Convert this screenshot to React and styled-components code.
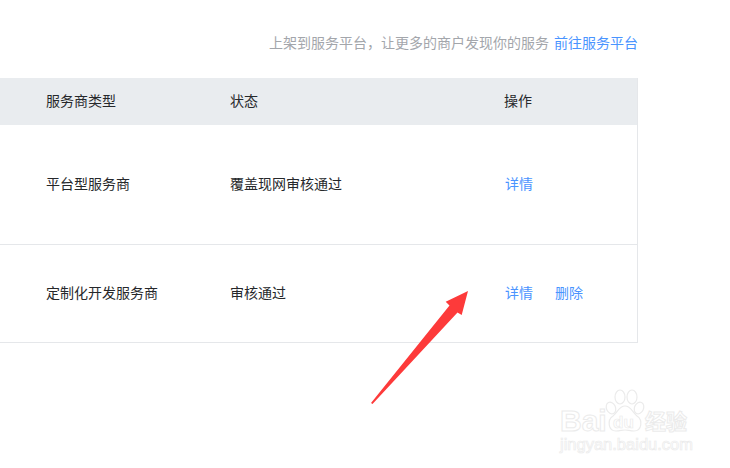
import React from "react";
import styled, { createGlobalStyle } from "styled-components";

const GlobalStyle = createGlobalStyle`
  html, body {
    margin: 0;
    padding: 0;
    background: #fff;
  }
  body {
    font-family: "Noto Sans CJK SC", "Liberation Sans", sans-serif;
    font-size: 14px;
  }
`;

const SPage = styled.div`
  position: relative;
  width: 730px;
  height: 468px;
  overflow: hidden;
  background: #fff;
`;

const SContent = styled.div`
  width: 638px;
  padding-top: 32px;
`;

const SNotice = styled.div`
  display: flex;
  justify-content: flex-end;
  gap: 5px;
  height: 20px;
  line-height: 20px;
  margin-bottom: 26px;
  color: #a3a6ab;
`;

const SLink = styled.a`
  color: #4a94ff;
  text-decoration: none;
  cursor: pointer;
`;

const STable = styled.div`
  border-right: 1px solid #e5e7ea;
  border-bottom: 1px solid #e5e7ea;
`;

const SRow = styled.div`
  display: grid;
  grid-template-columns: 230px 274px 1fr;
  align-items: center;
  height: ${(props) => props.$height}px;
  background: ${(props) => (props.$head ? "#e9ecef" : "#fff")};
  border-top: ${(props) => (props.$line ? "1px solid #e5e7ea" : "none")};
  color: #26282b;
`;

const SCell = styled.div`
  padding-left: ${(props) => props.$indent || 0}px;
  padding-bottom: 4px;
`;

const SActions = styled.div`
  display: flex;
  gap: 22px;
  padding-left: 1px;
  padding-bottom: 4px;
`;

const SArrow = styled.svg`
  position: absolute;
  left: 360px;
  top: 280px;
`;

const SWatermark = styled.div`
  position: absolute;
  left: 560px;
  top: 388px;
  width: 136px;
  height: 64px;
  color: #fff;
  -webkit-text-stroke: 1px #ebebeb;
  pointer-events: none;
`;

const SBaidu = styled.span`
  position: absolute;
  left: 0;
  top: 18px;
  font-family: "Liberation Sans", sans-serif;
  font-size: 30px;
  font-weight: 700;
  line-height: 30px;
`;

const SJingyan = styled.span`
  position: absolute;
  left: 85px;
  top: 17px;
  font-size: 21px;
  font-weight: 700;
  line-height: 30px;
  white-space: nowrap;
`;

const SDomain = styled.span`
  position: absolute;
  left: 0;
  top: 47px;
  font-family: "Liberation Sans", sans-serif;
  font-size: 16.5px;
  line-height: 18px;
  white-space: nowrap;
  -webkit-text-stroke-width: 0.7px;
`;

const SPaw = styled.svg`
  position: absolute;
  left: 45px;
  top: 1px;
`;

const SPawText = styled.span`
  position: absolute;
  left: 53px;
  top: 26px;
  font-family: "Liberation Sans", sans-serif;
  font-size: 17px;
  font-weight: 700;
  line-height: 18px;
  -webkit-text-stroke-width: 0.7px;
`;

function App() {
  return (
    <SPage>
      <GlobalStyle />
      <SContent>
        <SNotice>
          <span>上架到服务平台，让更多的商户发现你的服务</span>
          <SLink>前往服务平台</SLink>
        </SNotice>
        <STable>
          <SRow $head $height={47}>
            <SCell $indent={46}>服务商类型</SCell>
            <SCell>状态</SCell>
            <SCell>操作</SCell>
          </SRow>
          <SRow $height={119}>
            <SCell $indent={46}>平台型服务商</SCell>
            <SCell>覆盖现网审核通过</SCell>
            <SActions>
              <SLink>详情</SLink>
            </SActions>
          </SRow>
          <SRow $line $height={97}>
            <SCell $indent={46}>定制化开发服务商</SCell>
            <SCell>审核通过</SCell>
            <SActions>
              <SLink>详情</SLink>
              <SLink>删除</SLink>
            </SActions>
          </SRow>
        </STable>
      </SContent>

      <SArrow width="120" height="130" viewBox="360 280 120 130">
        <polygon
          points="468,291 461.7,315 457.5,312.5 372.5,404 371,403 449.5,305.5 445.7,301.7"
          fill="#fd3a3a"
        />
      </SArrow>

      <SWatermark>
        <SBaidu>Bai</SBaidu>
        <SPaw width="40" height="44" viewBox="0 0 40 44" fill="#fff" stroke="#ebebeb" strokeWidth="1.2">
          <ellipse cx="6" cy="19" rx="4.5" ry="6" transform="rotate(-25 6 19)" />
          <ellipse cx="15" cy="8" rx="5" ry="7" />
          <ellipse cx="27" cy="8" rx="5" ry="7" />
          <ellipse cx="34" cy="19" rx="4.5" ry="6" transform="rotate(25 34 19)" />
          <path d="M20 17c-6 0-7 6-12 10-6 4-5 15 3 15 4 0 6-1 9-1s5 1 9 1c8 0 9-11 3-15-5-4-6-10-12-10z" />
        </SPaw>
        <SPawText>du</SPawText>
        <SJingyan>经验</SJingyan>
        <SDomain>jingyan.baidu.com</SDomain>
      </SWatermark>
    </SPage>
  );
}

export default App;
